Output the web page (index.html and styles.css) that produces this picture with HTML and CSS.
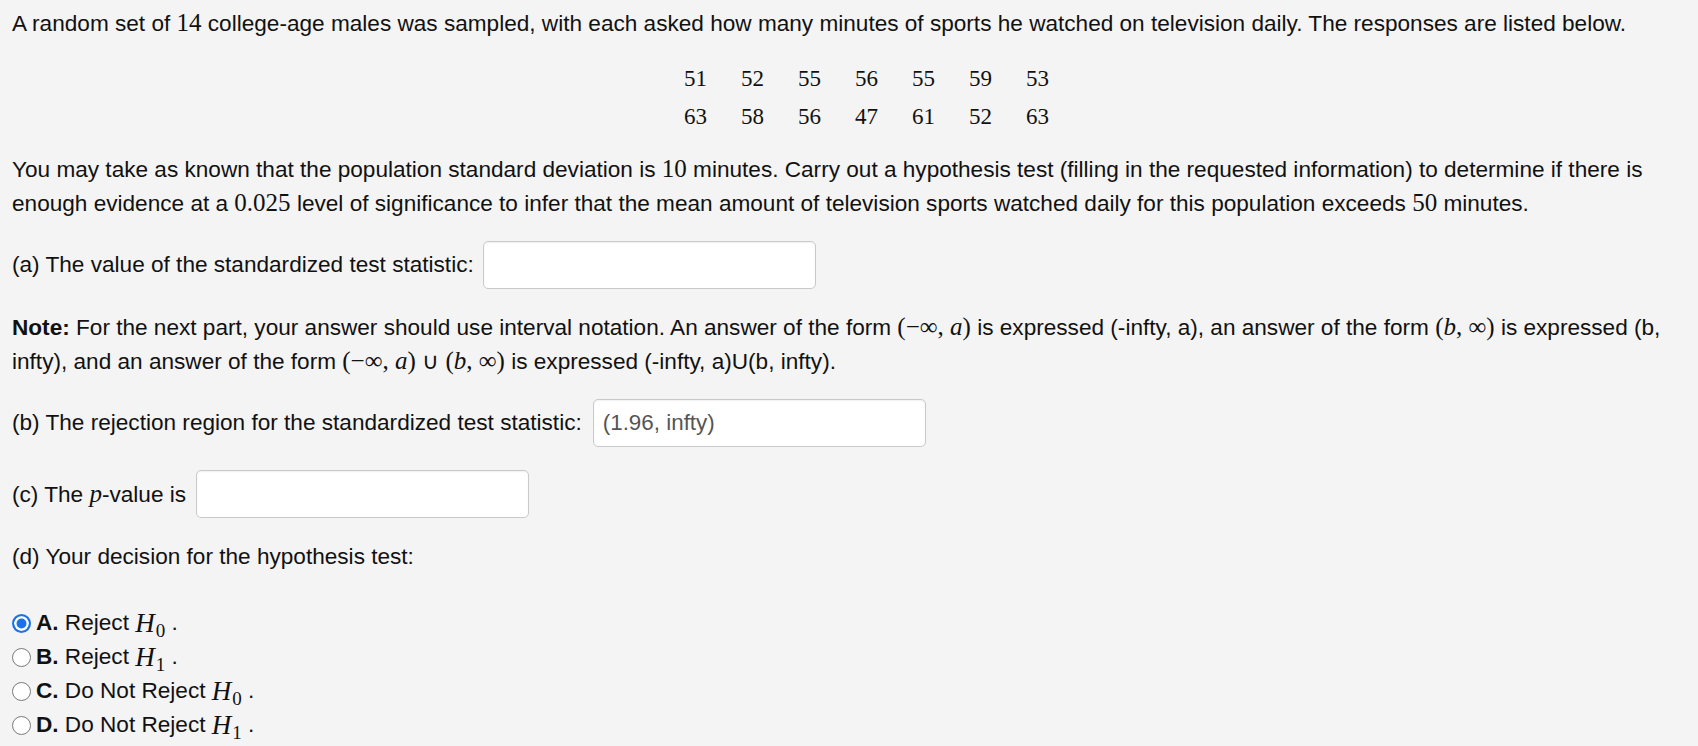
FILE: index.html
```html
<!DOCTYPE html>
<html>
<head>
<meta charset="utf-8">
<link rel="stylesheet" href="styles.css">
</head>
<body>
<div class="page">
  <p class="para first">A random set of <span class="mn">14</span> college-age males was sampled, with each asked how many minutes of sports he watched on television daily. The responses are listed below.</p>

  <div class="data-wrap">
    <div class="data">
      <span>51</span><span>52</span><span>55</span><span>56</span><span>55</span><span>59</span><span>53</span>
      <span>63</span><span>58</span><span>56</span><span>47</span><span>61</span><span>52</span><span>63</span>
    </div>
  </div>

  <p class="para p2">You may take as known that the population standard deviation is <span class="mn">10</span> minutes. Carry out a hypothesis test (filling in the requested information) to determine if there is enough evidence at a <span class="mn">0.025</span> level of significance to infer that the mean amount of television sports watched daily for this population exceeds <span class="mn">50</span> minutes.</p>

  <div class="row row-a">
    <span>(a) The value of the standardized test statistic:</span>
    <div class="field"></div>
  </div>

  <p class="para note"><b>Note:</b> For the next part, your answer should use interval notation. An answer of the form <span class="m">(−∞, <i>a</i>)</span> is expressed (-infty, a), an answer of the form <span class="m">(<i>b</i>, ∞)</span> is expressed (b, infty), and an answer of the form <span class="m">(−∞, <i>a</i>)</span> ∪ <span class="m">(<i>b</i>, ∞)</span> is expressed (-infty, a)U(b, infty).</p>

  <div class="row row-b">
    <span>(b) The rejection region for the standardized test statistic:</span>
    <div class="field">(1.96, infty)</div>
  </div>

  <div class="row row-c">
    <span>(c) The <i class="mi">p</i>-value is</span>
    <div class="field"></div>
  </div>

  <p class="para d">(d) Your decision for the hypothesis test:</p>

  <div class="choices">
    <div class="choice"><span class="radio on"></span><b>A.</b>&nbsp;Reject&nbsp;<span class="h"><i>H</i><sub>0</sub></span>&nbsp;.</div>
    <div class="choice"><span class="radio"></span><b>B.</b>&nbsp;Reject&nbsp;<span class="h"><i>H</i><sub>1</sub></span>&nbsp;.</div>
    <div class="choice"><span class="radio"></span><b>C.</b>&nbsp;Do Not Reject&nbsp;<span class="h"><i>H</i><sub>0</sub></span>&nbsp;.</div>
    <div class="choice"><span class="radio"></span><b>D.</b>&nbsp;Do Not Reject&nbsp;<span class="h"><i>H</i><sub>1</sub></span>&nbsp;.</div>
  </div>
</div>
</body>
</html>
```

FILE: styles.css
```css
html, body {
  margin: 0;
  padding: 0;
  background: #f4f4f4;
}
body {
  font-family: "Liberation Sans", Arial, Helvetica, sans-serif;
  font-size: 22.6px;
  color: #111;
}
.page {
  padding: 7px 12px 0 12px;
  display: flex;
  flex-direction: column;
}
.para {
  margin: 0;
  line-height: 34px;
}
.mn,
.m {
  font-family: "Liberation Serif", "Times New Roman", serif;
  font-size: 25px;
  line-height: 1;
}
.m i, .mi {
  font-family: "Liberation Serif", "Times New Roman", serif;
  font-style: italic;
  font-size: 25px;
  line-height: 1;
}
.data-wrap {
  display: flex;
  justify-content: center;
  padding-left: 36px;
  margin-top: 19px;
}
.data {
  display: grid;
  grid-template-columns: repeat(7, 24px);
  column-gap: 33px;
  grid-auto-rows: 38px;
  align-items: center;
  font-family: "Liberation Serif", "Times New Roman", serif;
  font-size: 23px;
}
.p2 {
  margin-top: 17px;
}
.row {
  display: flex;
  align-items: center;
  gap: 9px;
}
.row-a { margin-top: 20px; }
.row-b { margin-top: 20px; gap: 11px; }
.row-c { margin-top: 23px; gap: 10px; }
.note { margin-top: 22px; }
.d { margin-top: 22px; }
.field {
  width: 322px;
  height: 46px;
  background: #fff;
  border: 1px solid #c9c9c9;
  border-radius: 5px;
  box-shadow: inset 0 1px 2px rgba(0,0,0,0.06);
  display: flex;
  align-items: center;
  padding-left: 9px;
  box-sizing: content-box;
  font-size: 22.4px;
  color: #555;
  flex: none;
}
.choices {
  margin-top: 32px;
  display: flex;
  flex-direction: column;
}
.choice {
  height: 34px;
  display: flex;
  align-items: center;
  white-space: nowrap;
}
.choice b {
  font-weight: bold;
}
.radio {
  width: 19px;
  height: 19px;
  box-sizing: border-box;
  border-radius: 50%;
  border: 1.5px solid #7a7a7a;
  background: #fff;
  margin-right: 5px;
  flex: none;
}
.radio.on {
  border: 2px solid #1a73e8;
  background: #1a73e8;
  box-shadow: inset 0 0 0 2.5px #fff;
}
.h {
  font-family: "Liberation Serif", "Times New Roman", serif;
  font-size: 27px;
  line-height: 1;
}
.h i {
  font-style: italic;
}
.h sub {
  font-size: 19px;
  font-style: normal;
  vertical-align: -5px;
  line-height: 0;
  margin-left: 1px;
}
```
